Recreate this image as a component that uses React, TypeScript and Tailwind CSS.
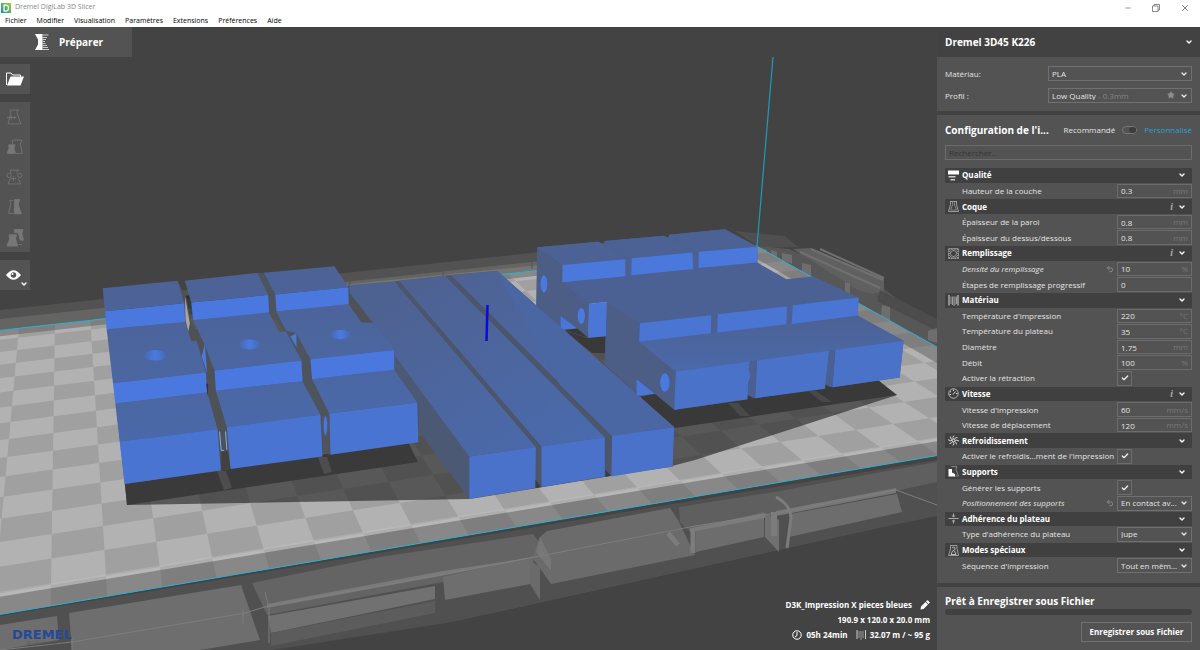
import type { ReactNode } from "react";
import { Check, ChevronDown, Minus, Pencil, Star, Undo2, X } from "lucide-react";

type Setting = {
  label: string;
  value?: string;
  unit?: string;
  checked?: boolean;
  options?: string[];
  changed?: boolean;
};

type Section = { title: string; icon: ReactNode; info?: boolean; settings: Setting[] };

// ── Category icons ─────────────────────────────────────────────────────────────
const icon = (children: ReactNode) => (
  <svg className="h-[11px] w-[11px] shrink-0" viewBox="0 0 22 22" fill="none" stroke="#d8d8d8" strokeWidth="1.5">
    {children}
  </svg>
);

const QualityIcon = icon(
  <g fill="#fff" stroke="none"><path d="M0 1h22v8H0z" /><path d="M1 12h14v3H1zM5 18h9v3H5z" fill="#ccc" /></g>
);
const ShellIcon = icon(
  <g stroke="#bbb"><path d="M4 1h14M5 1v6L1 21h20L17 7V1" /><path d="M9 1v7L5 18h12L13 8V1" stroke="#999" /></g>
);
const InfillIcon = icon(
  <g stroke="#aaa"><path d="M1 1h20v20H1z" strokeDasharray="3 1" /><circle cx="11" cy="11" r="6" /><path d="M5 1l-4 4 4 4-4 4 4 4-4 4M17 1l4 4-4 4 4 4-4 4 4 4M5 5l3-4 3 4 3-4 3 4M5 17l3 4 3-4 3 4 3-4" /></g>
);
const MaterialIcon = icon(
  <g strokeWidth="2"><path d="M2 0v21M20 0v21" /><path stroke="#999" d="M6 3v15M9 3v17M12 3v19M14 3v17M17 3v15" /></g>
);
const SpeedIcon = icon(
  <g><circle cx="11" cy="11" r="9.500" /><path d="M11 3v3M4 7l2 1M19 11h-3M3 13h3M10 13l5-6" strokeWidth="2" /></g>
);
const CoolingIcon = icon(
  <g strokeWidth="2"><path d="M11 9Q8 5 12 1M12 10q2-6 7-5M13 11q5-2 9 1M12 12q5 2 5 7M11 13q2 4-1 8M10 12q-2 5-7 5M9 11q-5 2-9-2M10 10Q4 9 5 3" /></g>
);
const SupportIcon = icon(
  <g><path d="M6 1h12l-2 6 5 13H11" stroke="#999" /><path d="M1 6h7v7l6 3v5H1z" fill="#fff" stroke="none" /></g>
);
const AdhesionIcon = icon(
  <g strokeWidth="2" stroke="#aaa"><path d="M1 11h20M11 1v7M11 21v-7" /><path d="M7 5l4 4 4-4zM7 17l4-4 4 4z" fill="#aaa" stroke="none" /></g>
);
const SpecialIcon = icon(
  <g stroke="#bbb"><path d="M5 1h13v6l3 14H1L5 8z" /><path d="M8 6q4-4 6 0t-5 6l-3 7h10l-3-7" strokeWidth="2" /></g>
);

const SECTIONS: Section[] = [
  { title: "Qualité", icon: QualityIcon, settings: [{ label: "Hauteur de la couche", value: "0.3", unit: "mm" }] },
  {
    title: "Coque", icon: ShellIcon, info: true,
    settings: [
      { label: "Épaisseur de la paroi", value: "0.8", unit: "mm" },
      { label: "Épaisseur du dessus/dessous", value: "0.8", unit: "mm" },
    ],
  },
  {
    title: "Remplissage", icon: InfillIcon, info: true,
    settings: [
      { label: "Densité du remplissage", value: "10", unit: "%", changed: true },
      { label: "Étapes de remplissage progressif", value: "0" },
    ],
  },
  {
    title: "Matériau", icon: MaterialIcon,
    settings: [
      { label: "Température d'impression", value: "220", unit: "°C" },
      { label: "Température du plateau", value: "35", unit: "°C" },
      { label: "Diamètre", value: "1.75", unit: "mm" },
      { label: "Débit", value: "100", unit: "%" },
      { label: "Activer la rétraction", checked: true },
    ],
  },
  {
    title: "Vitesse", icon: SpeedIcon, info: true,
    settings: [
      { label: "Vitesse d'impression", value: "60", unit: "mm/s" },
      { label: "Vitesse de déplacement", value: "120", unit: "mm/s" },
    ],
  },
  { title: "Refroidissement", icon: CoolingIcon, settings: [{ label: "Activer le refroidis...ment de l'impression", checked: true }] },
  {
    title: "Supports", icon: SupportIcon,
    settings: [
      { label: "Générer les supports", checked: true },
      { label: "Positionnement des supports", options: ["En contact av..."], changed: true },
    ],
  },
  { title: "Adhérence du plateau", icon: AdhesionIcon, settings: [{ label: "Type d'adhérence du plateau", options: ["Jupe"] }] },
  { title: "Modes spéciaux", icon: SpecialIcon, settings: [{ label: "Séquence d'impression", options: ["Tout en mêm..."] }] },
];

const MENUS = ["Fichier", "Modifier", "Visualisation", "Paramètres", "Extensions", "Préférences", "Aide"];

// ── Build plate ────────────────────────────────────────────────────────────────
// n runs along the plate's width and r along its depth, in 10 mm squares.
function project(n: number, r: number) {
  const w = 1 + 0.0115 * n + 0.0377 * r;
  const x = (51 + 56.23 * n + 2.34 * r) / w;
  const y = (585 - 2.47 * n - 5.39 * r) / w;
  return `${x.toFixed(1)} ${y.toFixed(1)}`;
}

function quad(n0: number, r0: number, n1: number, r1: number) {
  return `M${project(n0, r0)}L${project(n1, r0)}L${project(n1, r1)}L${project(n0, r1)}Z`;
}

const N0 = -2.5, N1 = 23, R0 = -0.74, R1 = 14.8;

let darkSquares = "";
for (let n = -3; n < 23; n++) {
  for (let r = -1; r < 15; r++) {
    if ((n + r) % 2 === 0) continue;
    darkSquares += quad(Math.max(n, N0), Math.max(r, R0), Math.min(n + 1, N1), Math.min(r + 1, R1));
  }
}

function Scene() {
  return (
    <svg className="absolute inset-0 h-full w-full" viewBox="0 27 937 623" preserveAspectRatio="xMinYMin slice" aria-hidden="true">
      <defs>
        <linearGradient id="top" x1="0" y1="0" x2="0" y2="1">
          <stop offset="0" stopColor="#4d6295" /><stop offset="1" stopColor="#4a69a9" />
        </linearGradient>
        <linearGradient id="bar" gradientUnits="userSpaceOnUse" x1="200" y1="60" x2="560" y2="620">
          <stop offset="0" stopColor="#4e6292" /><stop offset="1" stopColor="#4a6aad" />
        </linearGradient>
        <linearGradient id="hole" x1="0" y1="0" x2="1" y2="0">
          <stop offset="0" stopColor="#4965a8" /><stop offset="0.5" stopColor="#4a7be4" /><stop offset="1" stopColor="#4867ae" />
        </linearGradient>
      </defs>

      {/* Machine frame behind the plate */}
      <path d="M0 310L540 252V276L0 332Z" fill="#525252" />
      <path d="M0 319L540 261V276L0 332Z" fill="#646463" />
      <path d="M340 285L540 265V276L340 294Z" fill="#77756f" />
      <path d="M350 279v10M443 268v10M532 259v10" stroke="#555" />
      <path d="M735 231L785 236L798 247L760 248Z" fill="#4f4f4f" />
      <path d="M757 246L789 249L885 290L937 327V372L900 350L757 262Z" fill="#575757" />
      <path d="M793 249L811 248L884 279V291L872 294L858 290Z" fill="#606060" />
      <path d="M811 249l72 31M820 249l64 29M800 252l80 36" stroke="#707070" strokeWidth="2" />
      <path d="M880 290l57 29v12l-60-30z" fill="#4c4c4c" />
      <path d="M758 247l9 3v9h-9zM771 250l6 2v8h-6zM782 253l10 2v9l-10-4zM802 263l9 2v12l-9-4zM845 282l5 2v10l-5-3zM882 305l8 2v14l-9-4zM928 331l9-3v15l-9-3z" fill="#858585" opacity="0.500" />

      {/* Machine frame in front of the plate */}
      <path d="M0 616L937 460V524L903 523L453 622L320 650H0Z" fill="#505050" />
      <path d="M272 650L453 622L903 523L937 516V650Z" fill="#434343" />
      <path d="M0 625L57 616L59 640L0 650ZM69 613L241 585L260 640L200 650H72Z" fill="#6e6e6e" />
      <path d="M252 583L380 557L533 534L540 543V560L443 582L267 615Z" fill="#646464" />
      <path d="M268 616L435 586V599L271 633Z" fill="#717171" />
      <path d="M443 577L533 556L530 584L445 600Z" fill="#6e6e6e" />
      <path d="M271 633L435 601V613L271 646Z" fill="#5c5c5c" />
      <path d="M530 560L540 567V600L530 584Z" fill="#6a6a6a" />
      <path d="M540 537L547 531L670 508L678 520L695 555L551 584L532 557Z" fill="#6b6b6b" />
      <path d="M540 537l11 22v12l-15-19z" fill="#777" />
      <path d="M679 507L774 492L898 469L937 462V482L895 491L789 511L690 532L680 522Z" fill="#5f5f5f" />
      <path d="M696 528L764 512V537L696 552ZM790 514L897 494L902 512L789 537Z" fill="#6d6d6d" />
      <path d="M765 513L779 520V552L765 537Z" fill="#707070" />
      <path d="M776 497Q791 505 791 518L787 548" stroke="#7c7c7c" strokeWidth="3" fill="none" />
      <path d="M774 512V536" stroke="#7c7c7c" strokeWidth="6" />
      <path d="M693 530v23M668 533l10 12" stroke="#7c7c7c" strokeWidth="5" />
      <path d="M0 650L72 642L245 613L268 606L440 575L540 556L695 526L790 511L896 490L937 505" stroke="#7d7d7d" fill="none" />
      <path d="M267 608L440 576L541 556L443 571L267 604ZM690 528L765 513V518L690 532ZM776 511L896 488V493L776 516Z" fill="#808080" opacity="0.800" />
      <path d="M265 592l4 16v35M243 610v14M72 638v12" stroke="#7c7c7c" fill="none" />

      {/* Plate */}
      <path d={quad(N0, R0, N1, R1)} fill="#b2b2b2" />
      <path d={darkSquares} fill="#a0a0a0" />
      <path d={quad(N0, 0.06, N1, -0.12)} fill="#c0c0c0" opacity="0.400" />
      <path d={quad(N0, -0.12, N1, R0) + quad(N0, R1 - 0.5, N1, R1) + quad(N1 - 0.7, -0.12, N1, R1)} fill="#555" opacity="0.450" />
      <path d={`M${project(N0, R0)}L${project(N1, R0)}L${project(N1, R1)}L${project(N0, R1)}Z`} stroke="#27b0d2" fill="none" />
      <path d="M757 246L773 57" stroke="#1b9dbb" strokeWidth="1.200" />

      {/* Shadows */}
      <path d="M127 505L106 310L190 295L350 286L500 285L560 330L640 340L800 350L897 395L695 460L672 466L470 499Z" fill="#1c1c1c" opacity="0.600" />
      <path d="M125 484L408 442L418 462L127 505Z" fill="#3a3a3a" />
      <path d="M565 331L588 338L607 336L606 353H592ZM640 397L675 410L878 380L897 395L675 428Z" fill="#393939" />
      <path d="M217 471h9l6 17l-8 2zM318 457h9l5 15l-8 2z" fill="#4d4d4d" />
      <path d="M728 403l10 0l12 13h-10zM808 391l8 0l16 11h-10z" fill="#484848" />

      {/* Stepped parts on the left */}
      <g transform="translate(80 240) scale(0.333)">
        <path d="M293 122L320 175L335 250L375 315L400 392L442 560L452 688L424 692L413 568L382 458L378 398L350 302L316 246Z" fill="#4e5155" />
        <path d="M533 99L552 98L586 164L590 215L650 280L692 358L697 418L749 521L752 645L728 640L722 525L668 424L665 362L615 275L568 218Z" fill="#4e545e" />
        <path d="M806 130L873 248L944 330L1020 480L1168 650V776L1016 560L944 390L807 193Z" fill="#4d5259" />
        <path d="M315 168L330 250L325 275L317 240Z" fill="#a9a69d" />
        <path d="M375 312L382 400L365 350ZM632 290L650 280V322Z" fill="#4a78dc" />
        <path d="M68 145L293 122L313 190L75 214ZM80 268L316 246L335 305L350 302L378 398L99 430ZM106 491L382 458L413 568L119 605Z" fill="url(#top)" />
        <path d="M315 122L533 99L565 165L334 188ZM340 241L568 218L598 276L618 274L665 362L404 392L375 315ZM408 453L668 424L722 525L441 562Z" fill="url(#top)" />
        <path d="M552 98L764 79L806 142L586 164ZM590 215L807 193L845 248L900 248L944 330L692 358L650 280L618 272ZM697 418L944 390L1013 488L749 521Z" fill="url(#top)" />
        <path d="M75 214L313 190L316 246L80 268ZM99 430L378 398L382 458L106 491Z" fill="#4a78de" />
        <path d="M334 188L565 165L568 218L340 241ZM404 392L665 362L668 424L408 453Z" fill="#4a78de" />
        <path d="M586 164L806 142L807 193L590 215ZM692 358L944 330V390L697 418Z" fill="#4a78de" />
        <path d="M119 605L413 568L423 692L134 733ZM441 562L722 525L728 650L452 688ZM749 521L1013 488L1016 607L752 645Z" fill="#4a74d1" />
        <ellipse cx="226" cy="346" rx="35" ry="16" fill="url(#hole)" />
        <ellipse cx="509" cy="314" rx="32" ry="15" fill="url(#hole)" />
        <ellipse cx="782" cy="284" rx="32" ry="14" fill="url(#hole)" />
        <path d="M419 575l5 57l8 0M437 575l4 55" stroke="#7faef0" strokeWidth="3" fill="none" />
        <path d="M424 635l20 0l8 53l-28 4z" fill="#414141" />
        <ellipse cx="737" cy="558" rx="7" ry="30" fill="#4a78de" stroke="#4a5b80" strokeWidth="4" />
        <path d="M379 432l6 0l-1 38z" fill="#2d3342" />
      </g>

      {/* Long bars */}
      <g transform="translate(380 250) scale(0.333)">
        <path d="M42 94L58 92L195 77L213 75L352 63L883 532L879 650L677 680L467 715V592Z" fill="#4b566c" />
        <path d="M45 318L268 620V747L117 545L115 460L45 362Z" fill="#4b5975" />
        <path d="M-92 105L42 94L468 592L268 620L45 318L45 300L-90 130Z" fill="url(#bar)" />
        <path d="M58 92L195 77L675 562L485 590Z" fill="url(#bar)" />
        <path d="M213 75L352 63L883 532L697 557Z" fill="url(#bar)" />
        <path d="M268 620L468 592L467 715L268 747ZM485 590L675 562V680L485 712ZM697 557L883 532L879 650L695 680Z" fill="#4a72cb" />
        <path d="M467 690l16 22l-16 3zM677 660l16 18l-16 3z" fill="#3c3c3c" />
      </g>

      {/* Stepped parts on the right */}
      <g transform="translate(520 210) scale(0.333)">
        <path d="M52 112L235 95L250 101L255 93L432 77L445 83L448 74L615 58L713 110V158L800 208L880 200L1017 263L1014 318L1152 393L1140 503L938 532L917 525L706 565L684 555L463 600L362 558L255 465L260 276L207 282L205 384L135 362L49 292Z" fill="#4c6193" />
        <path d="M52 112L128 165L125 217L207 282L205 384L122 318V358L49 292ZM260 276L360 340L358 396L468 485L463 600L350 510V550L255 465Z" fill="#4c5d86" />
        <path d="M52 112L235 95L317 150L128 165ZM255 93L432 77L520 128L335 145ZM448 74L615 58L713 110L537 125Z" fill="#4c6295" />
        <path d="M358 396L1014 317L1152 393L468 485Z" fill="url(#top)" />
        <path d="M128 165L316 148V199L127 217ZM335 145L518 128L520 177L334 196ZM537 125L713 110V158L536 174Z" fill="#4a78db" />
        <path d="M207 282L260 276L258 379L205 384ZM122 318L172 356L122 361ZM350 508L405 552L350 558Z" fill="#4a76d6" />
        <path d="M360 340L574 316L573 370L358 396ZM594 313L802 289L800 343L592 368ZM819 286L1017 263L1014 317L816 342Z" fill="#4a75d3" />
        <path d="M468 485L690 455L686 480L693 495L685 520L684 568L463 600ZM712 452L928 423L917 537L706 565ZM947 420L1152 393L1140 503L938 532Z" fill="#4a72c9" />
        <path d="M690 455L712 452L706 565L684 556L685 520L693 495L686 480ZM928 423L947 420L938 532L917 524Z" fill="#4a5f92" />
        <path d="M684 556L700 565L684 568ZM917 524L932 533L917 537Z" fill="#393939" />
        <path d="M172 356L205 384L135 362L122 361ZM405 552L463 600L465 640L362 560Z" fill="#393939" />
        <ellipse cx="72" cy="222" rx="10" ry="26" fill="#4a79e0" />
        <ellipse cx="184" cy="318" rx="11" ry="24" fill="#4a79e0" />
        <ellipse cx="435" cy="518" rx="14" ry="28" fill="#4a79e0" />
      </g>

      {/* The last bar hides the feet of the parts behind it */}
      <path d="M497 271L674 427L612 436L560 385Z" fill="#4b67a3" />
      <path d="M487.500 305L486.500 341" stroke="#0b0bd2" strokeWidth="2.500" />
    </svg>
  );
}

// ── Left toolbar ───────────────────────────────────────────────────────────────
const TOOLS = [
  { name: "Déplacer", art: <path d="M5 2h18M7 2v6L2 28h24L19 8V2M0 16h16M8 12v8M13 13l3 3-3 3" /> },
  { name: "Mettre à l'échelle", art: <g><path d="M10 2h18l-3 8 4 17H16M10 2v8" /><path d="M3 11h12l-2 6 3 10H0l4-10z" fill="#777" /></g> },
  { name: "Tourner", art: <g><path d="M5 2h18M7 2v6M2 28h24L21 18M19 8V2M2 28l4-10" /><circle cx="4" cy="12" r="4" /><circle cx="24" cy="12" r="4" /><path d="M7 18h10M12 14v8" /></g> },
  { name: "Miroir", art: <g><path d="M12 3H5l2 8-4 16h9" /><path d="M14 1h10l-3 9 6 18H14z" fill="#777" /></g> },
  { name: "Paramètres par modèle", art: <g><path d="M14 1h16l-2 8 3 12h-6l-4-14h-7z" fill="#777" /><path d="M4 11h14l-2 7 4 14H0l5-14zM22 29h6" fill="#777" /></g> },
];

function Toolbar() {
  return (
    <div className="absolute left-0 top-[37px] flex w-[30px] flex-col gap-2">
      <button type="button" aria-label="Ouvrir un fichier" className="flex h-[30px] items-center justify-center bg-[#535353]">
        <svg className="h-[14px] w-[18px]" viewBox="0 0 36 28">
          <path d="M1 26V2h9l3 4h16v5" fill="none" stroke="#fff" strokeWidth="2" />
          <path d="M9 9h27l-7 18H2z" fill="#fff" />
        </svg>
      </button>
      <div className="flex flex-col bg-[#535353]">
        {TOOLS.map(tool => (
          <button key={tool.name} type="button" aria-label={tool.name} disabled className="flex h-[30px] items-center justify-center">
            <svg className="h-4 w-4 overflow-visible" viewBox="0 0 30 30" fill="none" stroke="#777" strokeWidth="1.500">{tool.art}</svg>
          </button>
        ))}
      </div>
      <button type="button" aria-label="Affichage" className="relative flex h-[30px] items-center bg-[#535353] pl-[6px]">
        <svg className="h-[10px] w-[15px]" viewBox="0 0 30 20">
          <path d="M0 10Q15-9 30 10Q15 29 0 10Z" fill="#fff" />
          <circle cx="15" cy="10" r="5.500" fill="#535353" /><circle cx="13" cy="8" r="2" fill="#fff" />
        </svg>
        <ChevronDown className="absolute bottom-0.5 right-0.5 h-2 w-2 text-white" strokeWidth={4} />
      </button>
    </div>
  );
}

function JobInfo() {
  return (
    <div className="absolute bottom-2 right-[7px] flex flex-col items-end text-[8px] font-bold leading-[15px] text-white">
      <div className="flex items-center gap-2">
        D3K_Impression X pieces bleues
        <svg className="h-[10px] w-[10px]" viewBox="0 0 20 20" fill="#fff">
          <path d="M1 19l1-6L11 4l5 5-9 9zM12 3l2-2q1-1 2 0l3 3q1 1 0 2l-2 2z" />
        </svg>
      </div>
      <div>190.9 x 120.0 x 20.0 mm</div>
      <div className="flex items-center gap-1">
        <svg className="h-[10px] w-[10px]" viewBox="0 0 20 20" fill="none" stroke="#fff" strokeWidth="2">
          <circle cx="10" cy="10" r="8.500" /><path d="M10 4v7l-4 3" />
        </svg>
        05h 24min
        <svg className="ml-1 h-[10px] w-[10px]" viewBox="0 0 20 20" stroke="#ccc" strokeWidth="2">
          <path d="M2 0v18M19 0v18" /><path d="M6 2v14M10 2v18M14 2v14" stroke="#999" />
        </svg>
        32.07 m / ~ 95 g
      </div>
    </div>
  );
}

// ── Settings panel ─────────────────────────────────────────────────────────────
function Dropdown({ label, options, id }: { label: string; options: string[]; id?: string }) {
  return (
    <div className="relative h-full">
      <select id={id} aria-label={label} className="block h-full w-full appearance-none border border-[#707070] bg-transparent pl-[3px] text-[8px] leading-none text-[#e4e4e4]">
        {options.map(o => <option key={o}>{o}</option>)}
      </select>
      <ChevronDown className="pointer-events-none absolute right-1 top-1/2 h-2 w-2 -translate-y-1/2 text-[#e8e8e8]" strokeWidth={4} />
    </div>
  );
}

function SettingRow({ setting, id }: { setting: Setting; id: string }) {
  const { label, value, unit, checked, options, changed } = setting;
  return (
    <div className="flex min-h-0 items-center pl-[17px] text-[8px] text-[#e4e4e4]">
      <label htmlFor={id} className={changed ? "flex-1 whitespace-nowrap italic" : "flex-1 whitespace-nowrap"}>{label}</label>
      {changed && (
        <button type="button" aria-label="Réinitialiser" className="mr-[3px]"><Undo2 className="h-2 w-2 text-[#888]" strokeWidth={3} /></button>
      )}
      <div className="relative h-full w-[75px] shrink-0">
        {options && <Dropdown id={id} label={label} options={options} />}
        {checked && (
          <div className="relative h-full w-[15px]">
            <input id={id} type="checkbox" defaultChecked className="peer block h-full w-full appearance-none border border-[#6c6c6c]" />
            <Check className="pointer-events-none absolute left-1 top-1/2 hidden h-2 w-2 -translate-y-1/2 text-[#eee] peer-checked:block" strokeWidth={4} />
          </div>
        )}
        {value && (
          <>
            <input id={id} defaultValue={value} className="block h-full w-full border border-[#6c6c6c] bg-transparent pl-[3px] leading-none outline-none" />
            <span className="absolute inset-y-0 right-1 flex items-center text-[#777]">{unit}</span>
          </>
        )}
      </div>
    </div>
  );
}

function SettingsPanel() {
  return (
    <aside className="flex w-[263px] shrink-0 flex-col gap-1 bg-[#424242] text-[#e4e4e4]">
      <div>
        <button type="button" className="flex h-[30px] w-full items-center justify-between pl-2 pr-[7px] text-[10px] font-bold text-white">
          Dremel 3D45 K226
          <ChevronDown className="h-2 w-2" strokeWidth={4} />
        </button>
        <div className="grid grid-cols-[1fr_144px] items-center gap-y-[7px] bg-[#535353] px-2 pb-2 pt-[9px] text-[8px]">
          <label htmlFor="material">Matériau:</label>
          <div className="h-[15px]"><Dropdown id="material" label="Matériau" options={["PLA"]} /></div>
          <label htmlFor="profile">Profil :</label>
          <div className="relative h-[15px]">
            <Dropdown id="profile" label="Profil" options={["Low Quality"]} />
            <span className="pointer-events-none absolute inset-y-0 left-[50px] flex items-center text-[#858585]">- 0.3mm</span>
            <Star className="pointer-events-none absolute right-[17px] top-[3px] h-2 w-2 text-[#8d8d8d]" fill="currentColor" />
          </div>
        </div>
      </div>

      <div className="flex flex-1 flex-col bg-[#535353] px-2 pb-[10px]">
        <div className="flex h-[30px] items-center justify-between text-[8px]">
          <h2 className="text-[10px] font-bold text-white">Configuration de l'i...</h2>
          <label className="flex items-center gap-[7px]">
            Recommandé
            <input type="checkbox" role="switch" defaultChecked className="peer sr-only" />
            <span className="flex h-2 w-[15px] justify-end rounded-full border border-[#757575] bg-[#535353]">
              <span className="h-[6px] w-[7px] rounded-full bg-[#3c3c3c]" />
            </span>
            <span className="text-[#2b9fd0]">Personnalisé</span>
          </label>
        </div>
        <input aria-label="Rechercher" placeholder="Rechercher..." className="h-[15px] shrink-0 border border-[#6c6c6c] bg-transparent pl-[3px] text-[8px] outline-none placeholder:text-[#353535]" />
        <div className="mt-2 grid flex-1 auto-rows-fr gap-px">
          {SECTIONS.map((section, i) => [
            <button key={section.title} type="button" className="flex min-h-0 items-center gap-[3px] bg-[#404040] pl-[3px] pr-[6px] text-left text-[8px] font-bold text-white">
              {section.icon}
              <span className="flex-1">{section.title}</span>
              {section.info && <i className="mr-0.5 font-['Liberation_Serif',serif] text-[10px] leading-none text-[#aaa]">i</i>}
              <ChevronDown className="h-2 w-2" strokeWidth={4} />
            </button>,
            ...section.settings.map((s, j) => <SettingRow key={s.label} id={`setting-${i}-${j}`} setting={s} />),
          ])}
        </div>
      </div>

      <div className="flex flex-col bg-[#535353] px-2 pb-2 pt-[6px]">
        <h2 className="text-[10px] font-bold leading-4 text-white">Prêt à Enregistrer sous Fichier</h2>
        <div className="h-[6px] rounded-full bg-[#404040]" />
        <button type="button" className="mt-[7px] h-5 w-[111px] self-end whitespace-nowrap border border-[#707070] text-[8px] font-bold text-white">
          Enregistrer sous Fichier
        </button>
      </div>
    </aside>
  );
}

export default function App() {
  return (
    <div className="flex min-h-screen flex-col bg-[#434343] font-['Open_Sans',sans-serif]">
      <header className="h-[27px] bg-white">
        <div className="flex h-[15px] items-center gap-1 pl-px pr-[10px] text-[7px] text-[#888]">
          <svg className="h-[10px] w-[10px]" viewBox="0 0 20 20">
            <defs>
              <linearGradient id="app" x1="0" y1="1" x2="1" y2="0"><stop stopColor="#168fa3" /><stop offset="1" stopColor="#a4ce39" /></linearGradient>
            </defs>
            <path d="M0 0h20v20H0z" fill="url(#app)" />
            <path d="M6 4h4q5 0 5 6t-5 6H6z" fill="none" stroke="#fff" strokeWidth="2.500" />
          </svg>
          <span className="flex-1">Dremel DigiLab 3D Slicer</span>
          <div className="flex items-center gap-5 text-[#666]">
            <button type="button" aria-label="Réduire"><Minus className="h-2 w-2" strokeWidth={2} /></button>
            <button type="button" aria-label="Restaurer">
              <svg className="h-2 w-2" viewBox="0 0 16 16" fill="none" stroke="currentColor" strokeWidth="1.500">
                <path d="M1 4h11v11H1zM4 4V1h11v11h-3" />
              </svg>
            </button>
            <button type="button" aria-label="Fermer"><X className="h-[10px] w-[10px]" strokeWidth={2} /></button>
          </div>
        </div>
        <nav className="flex h-3 items-center gap-[10px] pl-[5px] text-[7px] text-black">
          {MENUS.map(m => <button key={m} type="button">{m}</button>)}
        </nav>
      </header>

      <div className="flex flex-1">
        <main className="relative flex-1 overflow-hidden">
          <Scene />
          <button type="button" className="relative flex h-[30px] w-[132px] items-center gap-[10px] bg-[#535353] pl-[35px] text-[10px] font-bold text-white">
            <svg className="h-4 w-[14px]" viewBox="0 0 28 32" fill="#fff">
              <path d="M0 0h15v32H0L6 21V11z" />
              <path d="M15 1h12v2H15zM15 6h9v2h-9zM15 10h7v2h-7zM15 14h5v2h-5zM15 18h6v2h-6zM15 22h9v2h-9zM15 26h11v2H15zM15 30h13v2H15z" opacity="0.700" />
            </svg>
            Préparer
          </button>
          <Toolbar />
          <div className="absolute bottom-1 left-3 flex flex-col items-center font-['DejaVu_Sans',sans-serif] leading-none">
            <div className="text-[13px] font-bold text-[#24499a]">DREMEL</div>
            <div className="text-[5px] text-[#585858]">D I G I L A B</div>
          </div>
          <JobInfo />
        </main>
        <SettingsPanel />
      </div>
    </div>
  );
}
